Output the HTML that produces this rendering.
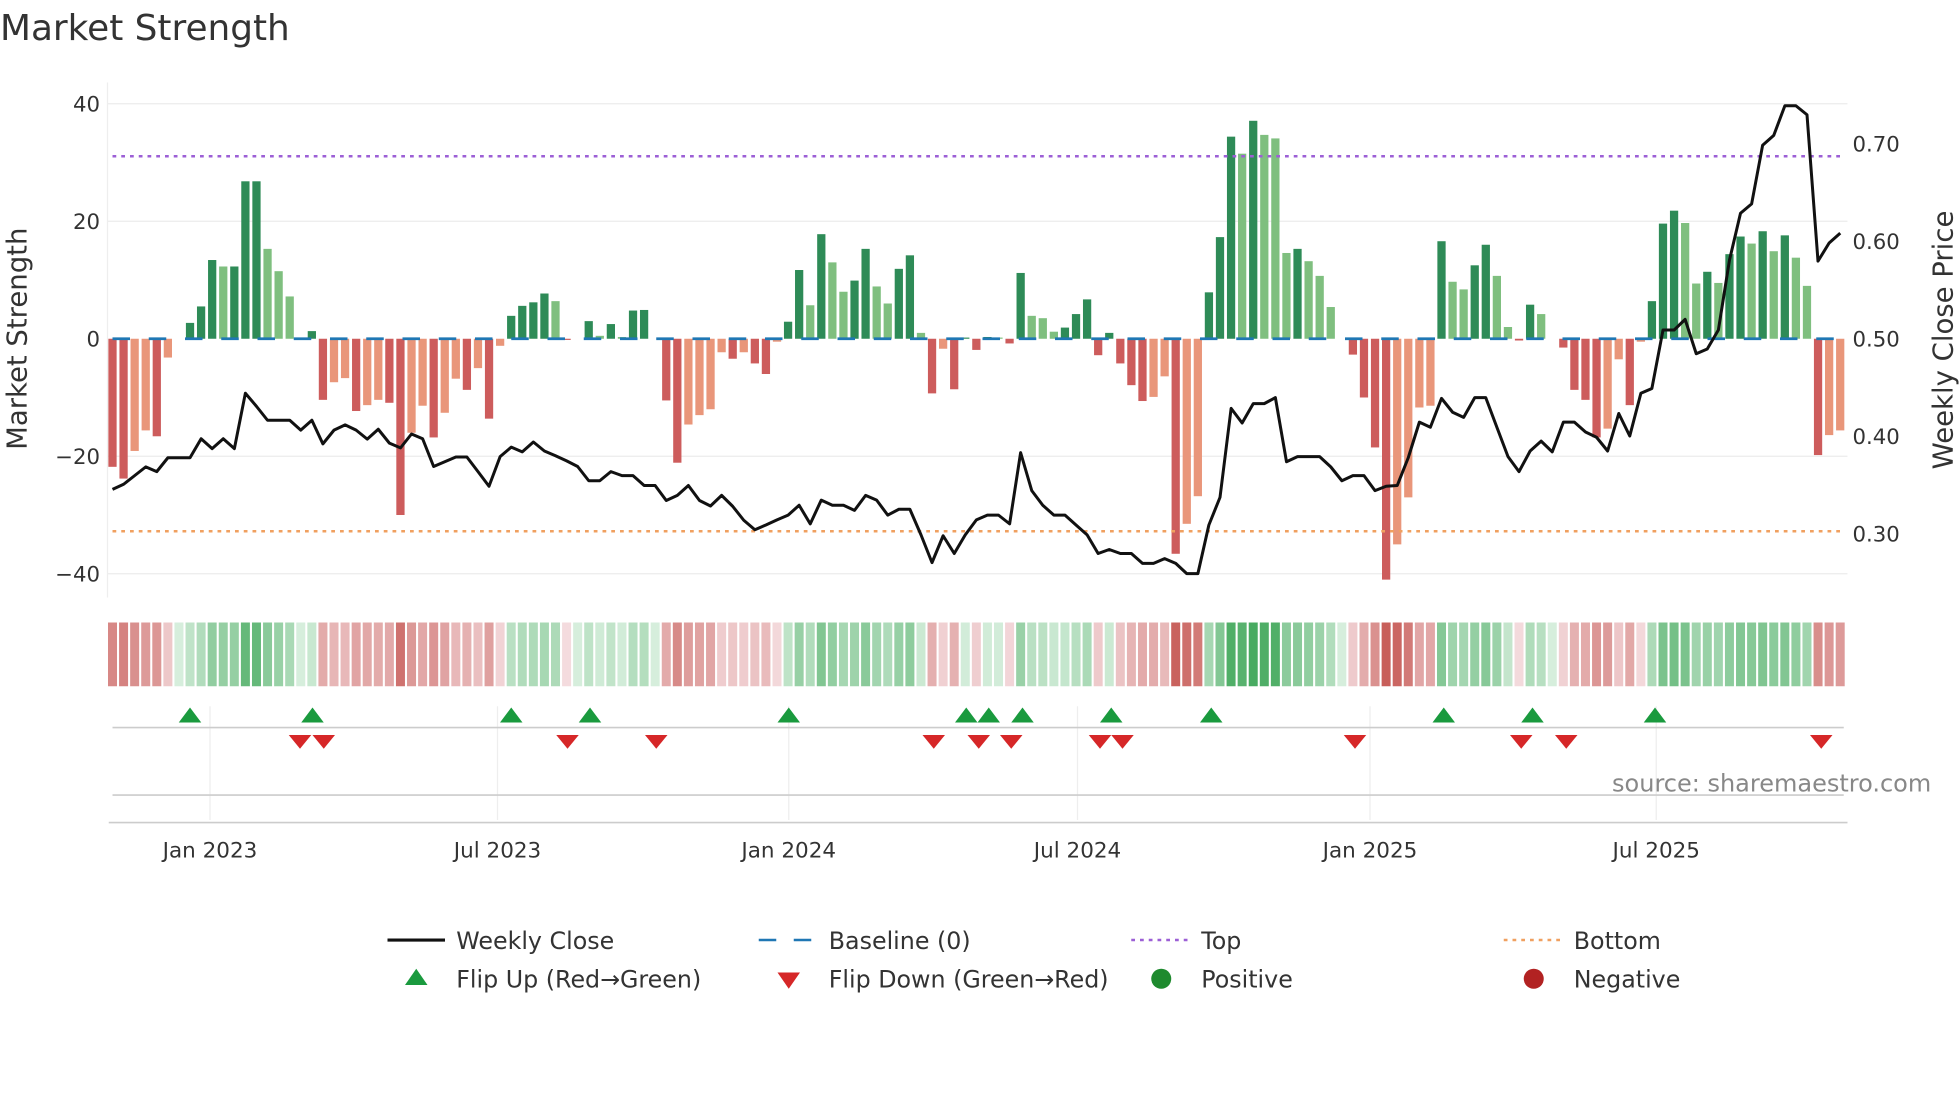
<!DOCTYPE html>
<html><head><meta charset="utf-8"><style>
html,body{margin:0;padding:0;background:#fff;}
svg{display:block;font-family:"DejaVu Sans","Liberation Sans",sans-serif;}
</style></head><body>
<svg id="s" width="1960" height="1102" viewBox="0 0 1568 881.6" xmlns="http://www.w3.org/2000/svg">
<rect width="1568" height="882" fill="#fff"/>
<text x="0" y="32" font-size="28.7" fill="#333">Market Strength</text>
<g stroke="#ececec" stroke-width="1">
<line x1="86" y1="83" x2="1478" y2="83"/><line x1="86" y1="177" x2="1478" y2="177"/>
<line x1="86" y1="365" x2="1478" y2="365"/><line x1="86" y1="459" x2="1478" y2="459"/>
</g>
<line x1="86" y1="66" x2="86" y2="478" stroke="#eee"/>
<g font-size="17" fill="#333" text-anchor="end">
<text x="80" y="89">40</text><text x="80" y="183">20</text><text x="80" y="277">0</text>
<text x="80" y="371">−20</text><text x="80" y="465">−40</text></g>
<g font-size="17" fill="#333">
<text x="1482" y="121">0.70</text><text x="1482" y="199">0.60</text><text x="1482" y="277">0.50</text>
<text x="1482" y="355">0.40</text><text x="1482" y="433">0.30</text></g>
<text transform="translate(21,271) rotate(-90)" font-size="22" fill="#333" text-anchor="middle">Market Strength</text>
<text transform="translate(1562,272) rotate(-90)" font-size="22" fill="#333" text-anchor="middle">Weekly Close Price</text>
<g id="bars"></g>
<line x1="90" y1="271" x2="1476" y2="271" stroke="#1f77b4" stroke-width="2.2" stroke-dasharray="14 15"/>
<line x1="90" y1="125" x2="1476" y2="125" stroke="#9c5fd6" stroke-width="2" stroke-dasharray="3 4"/>
<line x1="90" y1="425" x2="1476" y2="425" stroke="#f0a060" stroke-width="2" stroke-dasharray="3 4"/>
<polyline id="pl" fill="none" stroke="#111" stroke-width="2.4" stroke-linejoin="round"/>
<g id="strip"></g>
<g stroke="#eee"><line x1="168" y1="565" x2="168" y2="656"/><line x1="398" y1="565" x2="398" y2="656"/><line x1="631" y1="565" x2="631" y2="656"/><line x1="862" y1="565" x2="862" y2="656"/><line x1="1096" y1="565" x2="1096" y2="656"/><line x1="1325" y1="565" x2="1325" y2="656"/></g>
<line x1="90" y1="582" x2="1475" y2="582" stroke="#ccc" stroke-width="1.3"/>
<line x1="90" y1="636" x2="1475" y2="636" stroke="#ccc" stroke-width="1.3"/>
<line x1="87" y1="658" x2="1478" y2="658" stroke="#ccc" stroke-width="1.3"/>
<g id="mk"></g>
<text x="1545" y="633" font-size="19.2" fill="#888" text-anchor="end">source: sharemaestro.com</text>
<g font-size="17.2" fill="#333" text-anchor="middle">
<text x="168" y="686">Jan 2023</text><text x="398" y="686">Jul 2023</text><text x="631" y="686">Jan 2024</text>
<text x="862" y="686">Jul 2024</text><text x="1096" y="686">Jan 2025</text><text x="1325" y="686">Jul 2025</text></g>
<g font-size="19" fill="#333">
<line x1="310" y1="752" x2="356" y2="752" stroke="#111" stroke-width="2.5"/><text x="365" y="759">Weekly Close</text>
<line x1="607" y1="752" x2="653" y2="752" stroke="#1f77b4" stroke-width="2" stroke-dasharray="14 14"/><text x="663" y="759">Baseline (0)</text>
<line x1="905" y1="752" x2="951" y2="752" stroke="#9c5fd6" stroke-width="2" stroke-dasharray="3 4"/><text x="961" y="759">Top</text>
<line x1="1203" y1="752" x2="1249" y2="752" stroke="#f0a060" stroke-width="2" stroke-dasharray="3 4"/><text x="1259" y="759">Bottom</text>
<polygon points="324,788 342,788 333,775" fill="#1a9a3e"/><text x="365" y="790">Flip Up (Red→Green)</text>
<polygon points="622,778 640,778 631,791" fill="#d62728"/><text x="663" y="790">Flip Down (Green→Red)</text>
<circle cx="929" cy="783" r="8" fill="#1e8a2e"/><text x="961" y="790">Positive</text>
<circle cx="1227" cy="783" r="8" fill="#b22222"/><text x="1259" y="790">Negative</text>
</g>
</svg>
<script>
var V=[[-21.8,1],[-23.8,1],[-19.1,0],[-15.6,0],[-16.6,1],[-3.2,0],[0,0],[2.7,1],[5.5,1],[13.4,1],[12.3,0],[12.3,1],[26.8,1],[26.8,1],[15.3,0],[11.5,0],[7.2,0],[0,0],[1.3,1],[-10.4,1],[-7.4,0],[-6.7,0],[-12.3,1],[-11.3,0],[-10.4,0],[-10.9,1],[-30,1],[-16,0],[-11.4,0],[-16.8,1],[-12.6,0],[-6.8,0],[-8.7,1],[-5,0],[-13.6,1],[-1.2,0],[3.9,1],[5.6,1],[6.2,1],[7.7,1],[6.4,0],[-0.2,1],[0,0],[3,1],[0.5,0],[2.5,1],[0.3,0],[4.8,1],[4.9,1],[0,0],[-10.5,1],[-21.1,1],[-14.6,0],[-13,0],[-12,0],
[-2.3,0],[-3.4,1],[-2.3,0],[-4.2,1],[-6,1],[-0.5,0],[2.9,1],[11.7,1],[5.7,0],[17.8,1],[13,0],[8,0],[9.9,1],[15.3,1],[8.9,0],[6,0],[11.9,1],[14.2,1],[1,0],[-9.3,1],[-1.7,0],[-8.6,1],[0.2,1],[-1.9,1],[0.3,1],[0.2,0],[-0.8,1],[11.2,1],[3.9,0],[3.5,0],[1.2,0],[1.9,1],[4.2,1],[6.7,1],[-2.8,1],[1,1],[-4.2,1],[-7.9,1],[-10.6,1],[-9.9,0],[-6.4,0],[-36.6,1],[-31.5,0],[-26.8,0],[7.9,1],[17.3,1],[34.4,1],[31.5,0],[37.1,1],[34.7,0],[34.1,0],[14.6,0],
[15.3,1],[13.2,0],[10.7,0],[5.4,0],[0,0],[-2.7,1],[-10,1],[-18.5,1],[-41,1],[-35,0],[-27,0],[-11.7,0],[-11.4,0],[16.6,1],[9.7,0],[8.4,0],[12.5,1],[16,1],[10.7,0],[2,0],[-0.3,1],[5.8,1],[4.2,0],[0,0],[-1.5,1],[-8.7,1],[-10.4,1],[-16.8,1],[-15.3,0],[-3.5,0],[-11.3,1],[-0.5,0],[6.4,1],[19.6,1],[21.8,1],[19.7,0],[9.4,0],[11.4,1],[9.5,0],[14.4,1],[17.4,1],[16.2,0],[18.3,1],[14.9,0],[17.6,1],[13.8,0],[9,0],[-19.8,1],[-16.4,0],[-15.6,0]];
var L1=[1035,1022,1000,978,990,955,955,955,907,932,907,932,792,825,860,860,860,885,860,920,885,872,885,908,883,918,930,895,907,977,965,953,953,990,1027,952,928,940,915,938,950,963,977,1013,1013,990,1000,1000,1025,1025,1063,1050,1025,1063,1077];
var L2=[1050,1078,1113,1137,1125,1112,1100,1075,1122,1062,1075,1075,1088,1050,1062,1100,1085,1085,1150,1220,1152,1197,1150,1112,1100,1100,1122,942,1038,1075,1100,1100,1125,1150,1197,1187,1197,1197,1222,1222,1210,1222,1248,1248,1125,1055,830,867,818,818,803,965];
var L3=[952,952,952,978,1013,1000,1000,1038,1027,1025,955,865,878,805,840,853,803,803,878,952,990,938,913,940,865,865,890,903,938,843,900,792,780,632,632,605,692,680,632,455,337,313,165,140,65,65,88,458,412,387];
var L=L1.concat(L2,L3);
var ns="http://www.w3.org/2000/svg";
function X(i){return 90+i*8.86;}
function el(t,a,p){var e=document.createElementNS(ns,t);for(var k in a)e.setAttribute(k,a[k]);p.appendChild(e);return e;}
var bars=document.getElementById('bars'),strip=document.getElementById('strip');
function mix(a,b,t){return 'rgb('+[0,1,2].map(function(j){return Math.round(a[j]+(b[j]-a[j])*t)}).join(',')+')';}
V.forEach(function(v,i){
 var val=v[0],d=v[1],x=X(i),h=Math.abs(val)*4.7;
 var c=val>=0?(d?'#2e8b57':'#7fbf7f'):(d?'#cd5c5c':'#e9967a');
 if(h>0.3) el('rect',{x:x-3.3,y:val>=0?271-h:271,width:6.6,height:h,fill:c},bars);
 var t=Math.min(Math.abs(val)/38,1);t=Math.pow(t,0.7);
 var col=val>=0?mix([214,238,220],[70,170,95],t):mix([245,222,225],[200,95,90],t);
 el('rect',{x:x-3.6,y:498,width:7.2,height:51,fill:col},strip);
});
var pts=L.map(function(y,i){return X(i).toFixed(1)+','+(64+y/3.16).toFixed(1);}).join(' ');
document.getElementById('pl').setAttribute('points',pts);
var mk=document.getElementById('mk');
[152,250,409,472,631,773,791,818,889,969,1155,1226,1324].forEach(function(x){el('polygon',{points:(x-9)+',578 '+(x+9)+',578 '+x+',566',fill:'#1a9a3e'},mk);});
[240,259,454,525,747,783,809,880,898,1084,1217,1253,1457].forEach(function(x){el('polygon',{points:(x-9)+',588 '+(x+9)+',588 '+x+',599',fill:'#d62728'},mk);});
</script>
</body></html>
